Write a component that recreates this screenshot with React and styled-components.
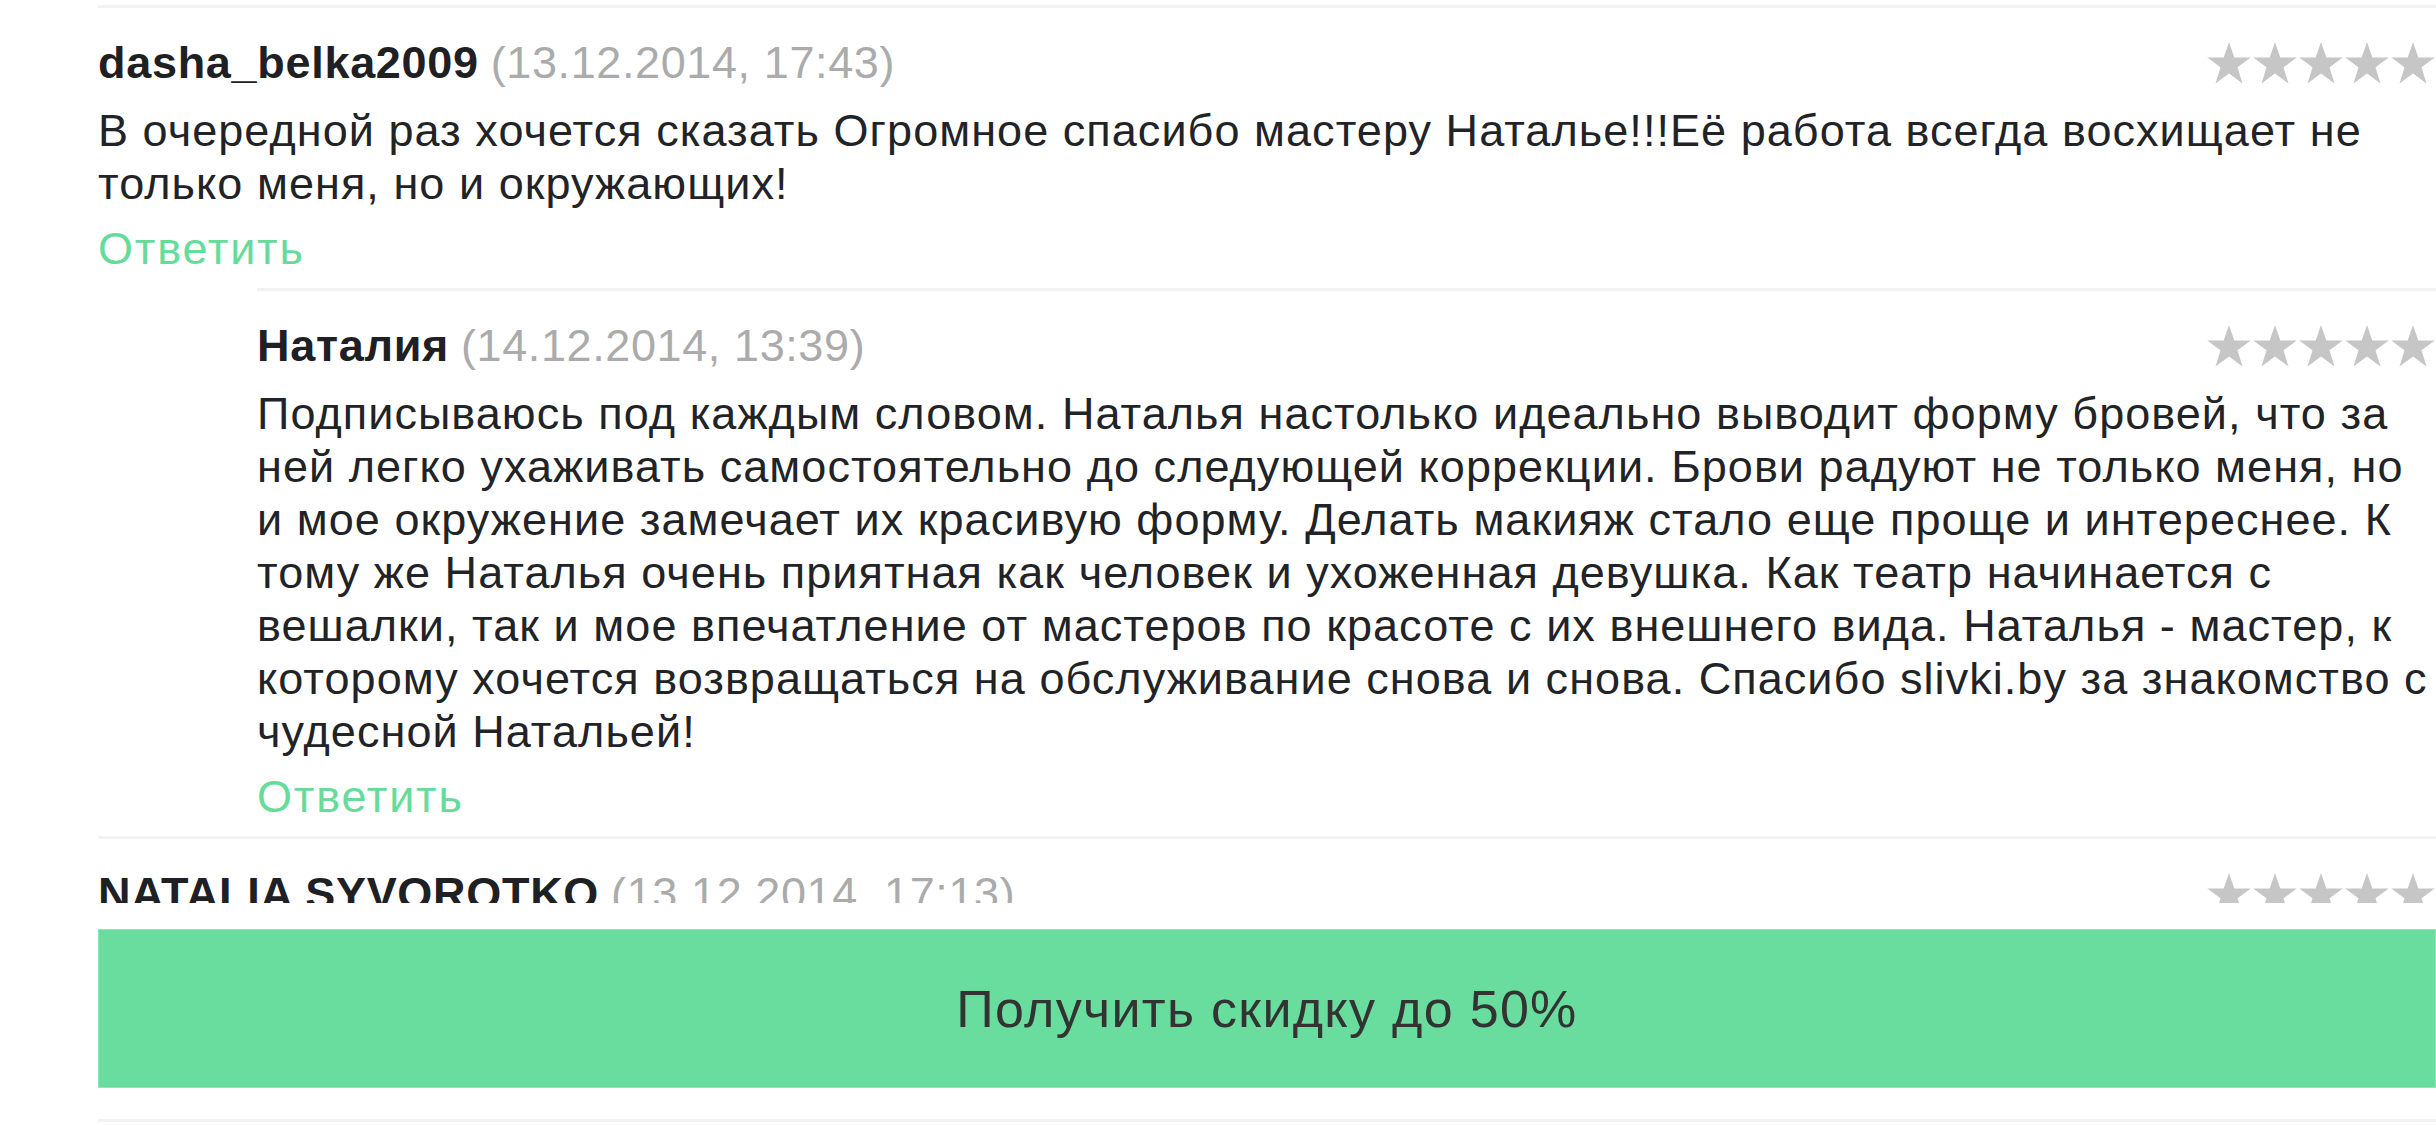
import React from 'react'
import styled, { createGlobalStyle } from 'styled-components'

const GlobalStyle = createGlobalStyle`
    html, body {
        margin : 0;
        padding : 0;
        background : #ffffff;
        overflow : hidden;
    }
    body {
        font-family : "Liberation Sans", Arial, sans-serif;
        color : #222326;
    }
`

const Page = styled.div`
    position : relative;
    width : 2436px;
    height : 1125px;
    overflow : hidden;
    padding-left : 98px;
    box-sizing : border-box;
`

const List = styled.div`
    padding-top : 5px;
`

const Comment = styled.div`
    margin-left : ${props => props.$indent ? '159px' : '0'};
    border-top : 3px solid #f2f2f2;
    padding : 28px 0 13px;
`

const Header = styled.div`
    display : flex;
    justify-content : space-between;
    align-items : center;
    font-size : 45px;
    line-height : 53px;
`

const Author = styled.span`
    font-weight : 700;
    color : #1f2024;
    letter-spacing : 0.7px;
`

const Date = styled.span`
    color : #ababab;
    margin-left : 12px;
    letter-spacing : 0.6px;
`

const Stars = styled.div`
    display : flex;
    flex-shrink : 0;
`

const Body = styled.p`
    margin : 15px 0 0;
    padding-right : 4px;
    font-size : 45px;
    line-height : 53px;
    letter-spacing : 1.05px;
`

const Reply = styled.a`
    display : block;
    margin-top : 12px;
    font-size : 45px;
    line-height : 53px;
    letter-spacing : 1.8px;
    color : #66dc9b;
    text-decoration : none;
    cursor : pointer;
`

const BottomBar = styled.div`
    position : absolute;
    left : 98px;
    right : 0;
    bottom : 0;
    background : #ffffff;
    padding-top : 26px;
    display : flex;
    flex-direction : column;
`

const Button = styled.button`
    height : 159px;
    width : 100%;
    margin : 0;
    background : #68dd9d;
    border : 1px solid #8ee6b8;
    color : #333333;
    font-family : "Liberation Sans", Arial, sans-serif;
    font-size : 52px;
    letter-spacing : 1.3px;
    cursor : pointer;
`

const Divider = styled.div`
    margin-top : 31px;
    height : 3px;
    background : #f2f2f2;
    margin-bottom : 3px;
`

const Star = () => (
    <svg width="46" height="44" viewBox="0 0 46 44">
        <path
            fill="#c6c6c6"
            d="M23 1 L28.3 16.6 L44.8 16.6 L31.5 26.3 L36.5 42.5 L23 32.6 L9.5 42.5 L14.5 26.3 L1.2 16.6 L17.7 16.6 Z"
        />
    </svg>
)

const Rating = () => (
    <Stars>
        {[0, 1, 2, 3, 4].map(i => <Star key={i} />)}
    </Stars>
)

const comments = [
    {
        author : 'dasha_belka2009',
        date : '13.12.2014, 17:43',
        text : 'В очередной раз хочется сказать Огромное спасибо мастеру Наталье!!!Её работа всегда восхищает не только меня, но и окружающих!'
    },
    {
        author : 'Наталия',
        date : '14.12.2014, 13:39',
        indent : true,
        text : 'Подписываюсь под каждым словом. Наталья настолько идеально выводит форму бровей, что за ней легко ухаживать самостоятельно до следующей коррекции. Брови радуют не только меня, но и мое окружение замечает их красивую форму. Делать макияж стало еще проще и интереснее. К тому же Наталья очень приятная как человек и ухоженная девушка. Как театр начинается с вешалки, так и мое впечатление от мастеров по красоте с их внешнего вида. Наталья - мастер, к которому хочется возвращаться на обслуживание снова и снова. Спасибо slivki.by за знакомство с чудесной Натальей!'
    },
    {
        author : 'NATALIA SYVOROTKO',
        date : '13.12.2014, 17:13',
        text : 'Спасибо за отличную работу!'
    }
]

export default function App() {
    return (
        <Page>
            <GlobalStyle />
            <List>
                {comments.map(c => (
                    <Comment key={c.author} $indent={c.indent}>
                        <Header>
                            <div>
                                <Author>{c.author}</Author>
                                <Date>({c.date})</Date>
                            </div>
                            <Rating />
                        </Header>
                        <Body>{c.text}</Body>
                        <Reply>Ответить</Reply>
                    </Comment>
                ))}
            </List>
            <BottomBar>
                <Button>Получить скидку до 50%</Button>
                <Divider />
            </BottomBar>
        </Page>
    )
}
